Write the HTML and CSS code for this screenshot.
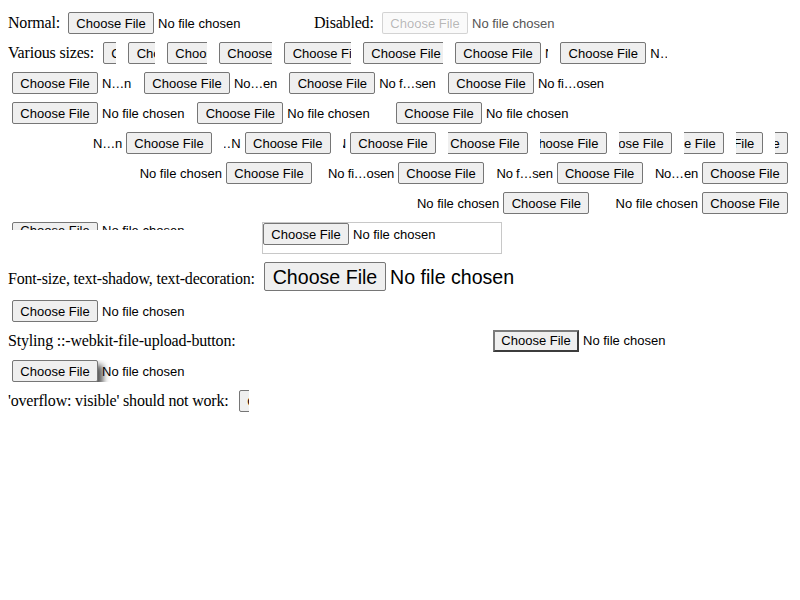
FILE: index.html
```html
<!DOCTYPE html>
<html>
<head>
<meta charset="utf-8">
<link rel="stylesheet" href="styles.css">
</head>
<body>
<div class="row">
  <span class="label l-normal">Normal:</span>
  <span class="file"><span class="btn">Choose File</span><span class="fname">No file chosen</span></span>
  <span class="label l-disabled">Disabled:</span>
  <span class="file disabled"><span class="btn">Choose File</span><span class="fname">No file chosen</span></span>
</div>
<div class="row">
  <span class="label l-sizes">Various sizes:</span>
  <span class="file w1"><span class="btn">Choose File</span><span class="fname">N…</span></span>
  <span class="file w2"><span class="btn">Choose File</span><span class="fname">N…</span></span>
  <span class="file w3"><span class="btn">Choose File</span><span class="fname">N…</span></span>
  <span class="file w4"><span class="btn">Choose File</span><span class="fname">N…</span></span>
  <span class="file w5"><span class="btn">Choose File</span><span class="fname">N…</span></span>
  <span class="file w6"><span class="btn">Choose File</span><span class="fname">N…</span></span>
  <span class="file w7"><span class="btn">Choose File</span><span class="fname">N…</span></span>
  <span class="file w8"><span class="btn">Choose File</span><span class="fname">N…</span></span>
</div>
<div class="row">
  <span class="file w9"><span class="btn">Choose File</span><span class="fname cut">N…n</span></span>
  <span class="file w10"><span class="btn">Choose File</span><span class="fname cut">No…en</span></span>
  <span class="file w11"><span class="btn">Choose File</span><span class="fname cut">No f…sen</span></span>
  <span class="file w12"><span class="btn">Choose File</span><span class="fname cut">No fi…osen</span></span>
</div>
<div class="row">
  <span class="file w13"><span class="btn">Choose File</span><span class="fname">No file chosen</span></span>
  <span class="file w14"><span class="btn">Choose File</span><span class="fname">No file chosen</span></span>
  <span class="file w15"><span class="btn">Choose File</span><span class="fname">No file chosen</span></span>
</div>
<div class="row rtl-row">
  <span class="file rtl w9"><span class="btn">Choose File</span><span class="fname cut">N…n</span></span>
  <span class="file rtl w8"><span class="btn">Choose File</span><span class="fname">…N</span></span>
  <span class="file rtl w7"><span class="btn">Choose File</span><span class="fname">…N</span></span>
  <span class="file rtl w6"><span class="btn">Choose File</span><span class="fname">…N</span></span>
  <span class="file rtl w5"><span class="btn">Choose File</span><span class="fname">…N</span></span>
  <span class="file rtl w4"><span class="btn">Choose File</span><span class="fname">…N</span></span>
  <span class="file rtl w3"><span class="btn">Choose File</span><span class="fname">…N</span></span>
  <span class="file rtl w2"><span class="btn">Choose File</span><span class="fname">…N</span></span>
  <span class="file rtl w1"><span class="btn">Choose File</span><span class="fname">…N</span></span>
</div>
<div class="row rtl-row">
  <span class="file rtl w13"><span class="btn">Choose File</span><span class="fname">No file chosen</span></span>
  <span class="file rtl w12"><span class="btn">Choose File</span><span class="fname cut">No fi…osen</span></span>
  <span class="file rtl w11"><span class="btn">Choose File</span><span class="fname cut">No f…sen</span></span>
  <span class="file rtl w10"><span class="btn">Choose File</span><span class="fname cut">No…en</span></span>
</div>
<div class="row rtl-row">
  <span class="file rtl w15"><span class="btn">Choose File</span><span class="fname">No file chosen</span></span>
  <span class="file rtl w14"><span class="btn">Choose File</span><span class="fname">No file chosen</span></span>
</div>
<div class="row row-tall">
  <span class="file short"><span class="btn">Choose File</span><span class="fname">No file chosen</span></span>
  <span class="file boxed"><span class="btn">Choose File</span><span class="fname">No file chosen</span></span>
</div>
<div class="row row-big">
  <span class="label l-font">Font-size, text-shadow, text-decoration:</span>
  <span class="file big"><span class="btn">Choose File</span><span class="fname">No file chosen</span></span>
</div>
<div class="row">
  <span class="file"><span class="btn">Choose File</span><span class="fname">No file chosen</span></span>
</div>
<div class="row">
  <span class="label l-styling">Styling ::-webkit-file-upload-button:</span>
  <span class="file styled"><span class="btn">Choose File</span><span class="fname">No file chosen</span></span>
</div>
<div class="row">
  <span class="file shadow"><span class="btn">Choose File</span><span class="fname">No file chosen</span></span>
</div>
<div class="row">
  <span class="label l-overflow">'overflow: visible' should not work:</span>
  <span class="file tiny"><span class="btn">Choose File</span><span class="fname">No file chosen</span></span>
</div>
</body>
</html>
```

FILE: styles.css
```css
html, body {
  background: #ffffff;
}

body {
  margin: 8px;
  font-family: "Liberation Serif", "Times New Roman", serif;
  font-size: 16px;
  color: #000000;
}

.row {
  display: flex;
  align-items: flex-start;
  column-gap: 4px;
  height: 30px;
  white-space: nowrap;
}

.rtl-row {
  justify-content: flex-end;
}

.row-tall {
  height: 40px;
}

.row-big {
  height: 38px;
}

.label {
  flex-shrink: 0;
  line-height: 30px;
  letter-spacing: -0.18px;
  white-space: nowrap;
}

.l-normal { width: 52px; }
.l-disabled { width: 60px; }
.l-sizes { width: 87px; }
.l-font { width: 248px; padding-top: 6px; line-height: 30px; }
.l-styling { width: 477px; }
.l-overflow { width: 223px; }

.file {
  display: flex;
  align-items: baseline;
  flex-shrink: 0;
  margin: 4px;
  width: 238px;
  overflow: clip;
  font-family: "Liberation Sans", Arial, sans-serif;
  font-size: 13px;
  color: #000000;
}

.btn {
  flex-shrink: 0;
  box-sizing: border-box;
  width: 86px;
  height: 22px;
  padding: 1px 0 0;
  line-height: 19px;
  text-align: center;
  border: 1px solid #767676;
  border-radius: 2px;
  background: #efefef;
  margin-right: 4px;
}

.fname {
  flex-shrink: 0;
  white-space: nowrap;
}

.fname.cut {
  letter-spacing: -0.2px;
}

.rtl {
  flex-direction: row-reverse;
}

.rtl .btn {
  margin-right: 0;
  margin-left: 4px;
}

.w1 { width: 13.333px; }
.w2 { width: 26.667px; }
.w3 { width: 40px; }
.w4 { width: 53.333px; }
.w5 { width: 66.667px; }
.w6 { width: 80px; }
.w7 { width: 93.333px; }
.w8 { width: 106.667px; }
.w9 { width: 120px; }
.w10 { width: 133.333px; }
.w11 { width: 146.667px; }
.w12 { width: 160px; }
.w13 { width: 173.333px; }
.w14 { width: 186.667px; }
.w15 { width: 200px; }

.disabled {
  color: #545454;
}

.disabled .btn {
  color: rgba(16, 16, 16, 0.3);
  background: rgba(239, 239, 239, 0.3);
  border-color: rgba(118, 118, 118, 0.3);
}

.short {
  height: 8px;
}

.short .btn {
  line-height: 13px;
}

.boxed {
  height: 30px;
  border: 1px solid #c8c8c8;
}

.big {
  width: auto;
  font-size: 19.6px;
}

.big .btn {
  width: 122px;
  height: 29px;
  line-height: 26px;
}

.styled .btn {
  border-width: 2px;
  border-style: solid;
  border-color: #7a7a7a #3c3c3c #3c3c3c #7a7a7a;
  border-radius: 0;
  padding-top: 0;
  line-height: 18px;
}

.shadow .btn {
  box-shadow: 5px 5px 6px #555555;
}

.tiny {
  width: 10px;
}
```
